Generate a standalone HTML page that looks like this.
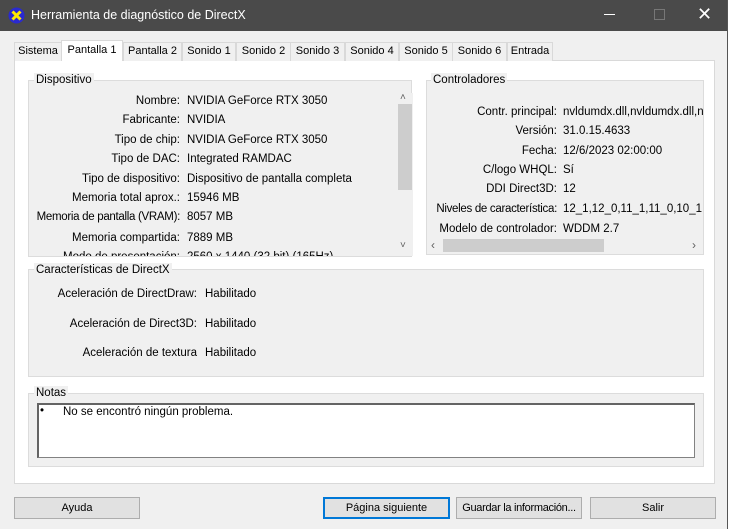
<!DOCTYPE html><html><head><meta charset="utf-8"><style>
body{margin:0;width:731px;height:529px;overflow:hidden;background:#fff;font-family:"Liberation Sans",sans-serif;font-size:11.5px;color:#000;position:relative}
div,span{position:absolute;box-sizing:border-box;white-space:nowrap}
.win{left:0;top:0;width:728px;height:529px;background:#f0f0f0;border-right:1px solid #555}
.title{left:0;top:0;width:727px;height:31px;background:#4a4a4a;color:#fff}
.tab{top:42px;height:19px;border:1px solid #d9d9d9;border-bottom:none;background:#f0f0f0;text-align:center;line-height:17px;font-size:11px}
.panel{left:14px;top:60px;width:701px;height:424px;background:#fff;border:1px solid #d9d9d9}
.grp{border:1px solid #dcdcdc;background:#f0f0f0}
.gl{background:#f0f0f0;padding:0 2px;line-height:14px}
.l{text-align:right}
.btn{top:497px;height:22px;border:1px solid #adadad;background:#e1e1e1;text-align:center;line-height:20px;font-size:11px}
</style></head><body>
<div class="win">
<div class="title">
<svg style="position:absolute;left:8px;top:7px" width="17" height="17" viewBox="0 0 17 17"><circle cx="8.5" cy="8.5" r="8" fill="#2a2ad0"/><path d="M4.5 4.5L12.5 12.5M12.5 4.5L4.5 12.5" stroke="#ffe800" stroke-width="3"/></svg>
<span style="left:31px;top:8px;font-size:12.5px;color:#fff">Herramienta de diagnóstico de DirectX</span>
<span style="left:604px;top:14px;width:11px;height:1px;background:#fff"></span>
<span style="left:654px;top:9px;width:11px;height:11px;border:1px solid #777"></span>
<span style="left:697px;top:4px;font-size:18px;color:#fff">✕</span>
</div>
<div class="panel"></div>
<div class="tab" style="left:14px;width:48px">Sistema</div>
<div class="tab" style="left:61px;width:62px;top:40px;height:21px;background:#fff;line-height:19px">Pantalla 1</div>
<div class="tab" style="left:123px;width:59px">Pantalla 2</div>
<div class="tab" style="left:182px;width:54px">Sonido 1</div>
<div class="tab" style="left:236px;width:55px">Sonido 2</div>
<div class="tab" style="left:290px;width:55px">Sonido 3</div>
<div class="tab" style="left:345px;width:54px">Sonido 4</div>
<div class="tab" style="left:399px;width:54px">Sonido 5</div>
<div class="tab" style="left:452px;width:55px">Sonido 6</div>
<div class="tab" style="left:507px;width:46px">Entrada</div>

<div class="grp" style="left:28px;top:80px;width:384px;height:177px"></div>
<div class="gl" style="left:34px;top:73px">Dispositivo</div>
<div style="left:32px;top:93px;width:366px;height:163px;overflow:hidden">
<div class="l" style="left:0;width:148px;top:2px">Nombre:</div><div style="left:155px;top:2px">NVIDIA GeForce RTX 3050</div>
<div class="l" style="left:0;width:148px;top:21px">Fabricante:</div><div style="left:155px;top:21px">NVIDIA</div>
<div class="l" style="left:0;width:148px;top:41px">Tipo de chip:</div><div style="left:155px;top:41px">NVIDIA GeForce RTX 3050</div>
<div class="l" style="left:0;width:148px;top:60px">Tipo de DAC:</div><div style="left:155px;top:60px">Integrated RAMDAC</div>
<div class="l" style="left:0;width:148px;top:80px">Tipo de dispositivo:</div><div style="left:155px;top:80px">Dispositivo de pantalla completa</div>
<div class="l" style="left:0;width:148px;top:99px">Memoria total aprox.:</div><div style="left:155px;top:99px">15946 MB</div>
<div class="l" style="left:0;width:148px;top:118px;letter-spacing:-0.3px">Memoria de pantalla (VRAM):</div><div style="left:155px;top:118px">8057 MB</div>
<div class="l" style="left:0;width:148px;top:139px">Memoria compartida:</div><div style="left:155px;top:139px">7889 MB</div>
<div class="l" style="left:0;width:148px;top:158px">Modo de presentación:</div><div style="left:155px;top:158px">2560 x 1440 (32 bit) (165Hz)</div>
</div>
<div style="left:397px;top:93px;width:16px;height:163px;background:#f0f0f0"></div>
<div style="left:398px;top:104px;width:14px;height:86px;background:#cdcdcd"></div>
<span style="left:400px;top:92px;font-size:10px;color:#606060">˄</span>
<span style="left:400px;top:240px;font-size:10px;color:#606060">˅</span>

<div class="grp" style="left:426px;top:80px;width:278px;height:175px"></div>
<div class="gl" style="left:431px;top:73px">Controladores</div>
<div style="left:427px;top:100px;width:276px;height:137px;overflow:hidden">
<div class="l" style="left:0;width:130px;top:6px">Contr. principal:</div><div style="left:136px;top:6px">nvldumdx.dll,nvldumdx.dll,nvldumdx.dll</div>
<div class="l" style="left:0;width:130px;top:25px">Versión:</div><div style="left:136px;top:25px">31.0.15.4633</div>
<div class="l" style="left:0;width:130px;top:45px">Fecha:</div><div style="left:136px;top:45px">12/6/2023 02:00:00</div>
<div class="l" style="left:0;width:130px;top:64px">C/logo WHQL:</div><div style="left:136px;top:64px">Sí</div>
<div class="l" style="left:0;width:130px;top:83px">DDI Direct3D:</div><div style="left:136px;top:83px">12</div>
<div class="l" style="left:0;width:130px;top:103px;letter-spacing:-0.3px">Niveles de característica:</div><div style="left:136px;top:103px">12_1,12_0,11_1,11_0,10_1,10_0</div>
<div class="l" style="left:0;width:130px;top:123px">Modelo de controlador:</div><div style="left:136px;top:123px">WDDM 2.7</div>
</div>
<div style="left:427px;top:237px;width:276px;height:17px;background:#f0f0f0"></div>
<div style="left:443px;top:239px;width:161px;height:13px;background:#cdcdcd"></div>
<span style="left:431px;top:238px;font-size:12px;color:#606060">‹</span>
<span style="left:692px;top:238px;font-size:12px;color:#606060">›</span>

<div class="grp" style="left:28px;top:269px;width:676px;height:108px"></div>
<div class="gl" style="left:34px;top:263px">Características de DirectX</div>
<div class="l" style="left:30px;width:167px;top:288px">Aceleración de DirectDraw:</div><div style="left:205px;top:288px">Habilitado</div>
<div class="l" style="left:30px;width:167px;top:318px">Aceleración de Direct3D:</div><div style="left:205px;top:318px">Habilitado</div>
<div class="l" style="left:30px;width:167px;top:347px">Aceleración de textura</div><div style="left:205px;top:347px">Habilitado</div>

<div class="grp" style="left:28px;top:393px;width:676px;height:74px"></div>
<div class="gl" style="left:34px;top:386px">Notas</div>
<div style="left:37px;top:403px;width:658px;height:55px;background:#fff;border:1px solid #828282;border-top:2px solid #646464;border-left:2px solid #646464"></div>
<span style="left:40px;top:405px">•</span>
<span style="left:63px;top:406px">No se encontró ningún problema.</span>

<div class="btn" style="left:14px;width:126px">Ayuda</div>
<div class="btn" style="left:323px;width:127px;border:2px solid #0078d7;line-height:18px">Página siguiente</div>
<div class="btn" style="left:456px;width:126px;letter-spacing:-0.3px">Guardar la información...</div>
<div class="btn" style="left:590px;width:126px">Salir</div>
</div>
</body></html>
